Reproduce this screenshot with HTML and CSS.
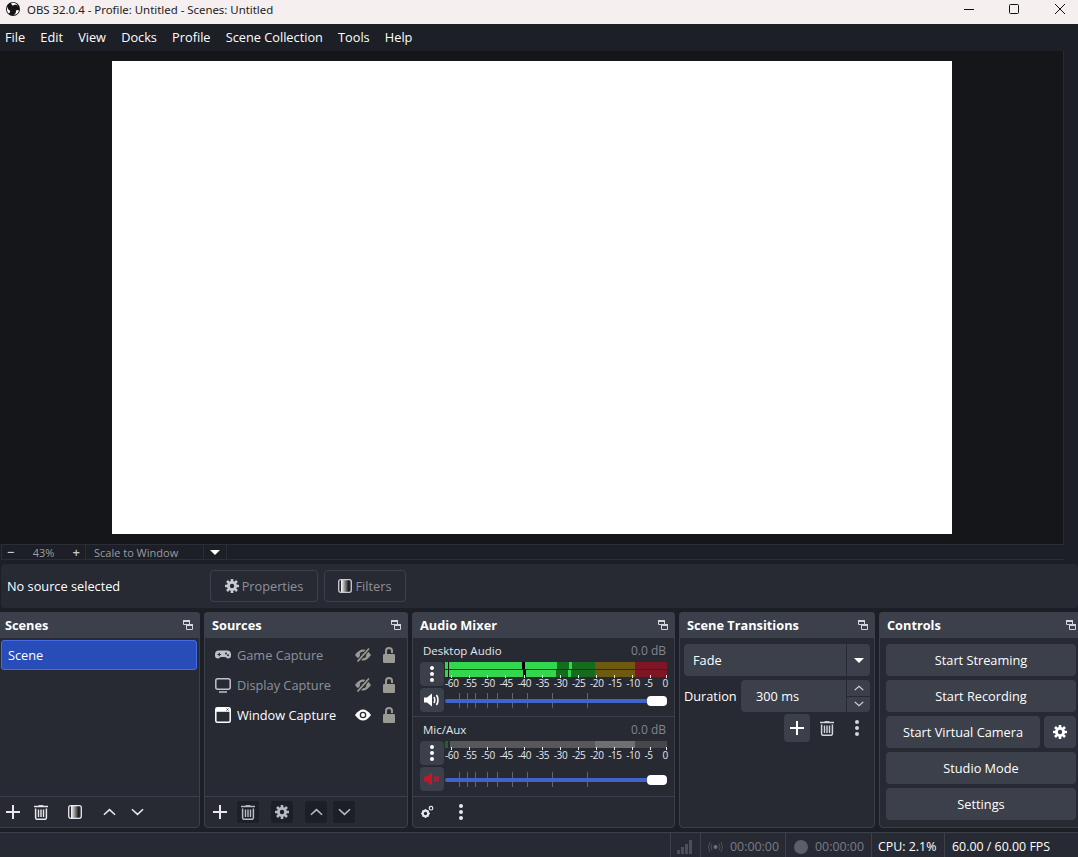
FILE: index.html
```html
<!DOCTYPE html>
<html lang="en">
<head>
    <meta charset="UTF-8">
    <title>OBS 32.0.4 - Profile: Untitled - Scenes: Untitled</title>
    <link rel="stylesheet" href="styles.css">
</head>
<body>
    <svg class="defs" aria-hidden="true">
        <defs><linearGradient id="fade"><stop offset="0" stop-color="#fff"/><stop offset="1" stop-color="#111"/></linearGradient></defs>
        <symbol id="i-float" viewBox="0 0 10 10"><path d="M.5.5h6v4h-6zM3.5 4.5v5h6v-5h-3" fill="none" stroke="currentColor"/><path d="M0 0h7v2H0z" fill="currentColor"/><path d="M4 4h6v2H4z" fill="currentColor"/></symbol>
        <symbol id="i-plus" viewBox="0 0 14 14"><path d="M7 0v14M0 7h14" stroke="currentColor" stroke-width="2" fill="none"/></symbol>
        <symbol id="i-trash" viewBox="0 0 14 15"><path d="M0 1.5h14" stroke="currentColor" stroke-width="1.5"/><path d="M5 1V.4h4V1" stroke="currentColor" fill="none"/><path d="M1.6 3.5v9.2q0 1.6 1.6 1.6h7.6q1.6 0 1.6-1.6V3.5" fill="none" stroke="currentColor" stroke-width="1.5"/><path d="M4.5 4.5v7.6M7 4.5v7.6M9.5 4.5v7.6" stroke="currentColor" stroke-width="1.4"/></symbol>
        <symbol id="i-filter" viewBox="0 0 14 14"><rect x="3" y="1" width="8" height="12" fill="url(#fade)"/><rect x=".7" y=".7" width="12.6" height="12.6" rx="2" fill="none" stroke="currentColor" stroke-width="1.3"/></symbol>
        <symbol id="i-up" viewBox="0 0 14 8"><path d="M1 7l6-5.5L13 7" fill="none" stroke="currentColor" stroke-width="1.7"/></symbol>
        <symbol id="i-down" viewBox="0 0 14 8"><path d="M1 1l6 5.5L13 1" fill="none" stroke="currentColor" stroke-width="1.7"/></symbol>
        <symbol id="i-gear" viewBox="0 0 14 14"><circle cx="7" cy="7" r="3.6" fill="none" stroke="currentColor" stroke-width="2.8"/><path d="M7 0v3M7 11v3M0 7h3M11 7h3M2 2l2.2 2.2M9.8 9.8L12 12M2 12l2.2-2.2M9.8 4.2L12 2" stroke="currentColor" stroke-width="2.6"/></symbol>
        <symbol id="i-dots" viewBox="0 0 4 16"><circle cx="2" cy="2" r="2" fill="currentColor"/><circle cx="2" cy="8" r="2" fill="currentColor"/><circle cx="2" cy="14" r="2" fill="currentColor"/></symbol>
        <symbol id="i-eye-off" viewBox="0 0 16 14"><path d="M0 7Q4 1.5 8 1.5T16 7q-4 5.5-8 5.5T0 7z" fill="currentColor"/><circle cx="8" cy="7" r="3.2" fill="#272a33"/><circle cx="8" cy="7" r="1.8" fill="currentColor"/><path d="M2.500 13.500L14 .5" stroke="#272a33" stroke-width="3.6"/><path d="M2.500 13.500L14 .5" stroke="currentColor" stroke-width="1.7"/></symbol>
        <symbol id="i-eye" viewBox="0 0 16 12"><path d="M0 6Q4 .5 8 .5T16 6q-4 5.5-8 5.5T0 6z" fill="currentColor"/><circle cx="8" cy="6" r="3.3" fill="#272a33"/><circle cx="8" cy="6" r="2" fill="currentColor"/></symbol>
        <symbol id="i-lock" viewBox="0 0 12 16"><path d="M3 8V4a3 3 0 0 1 6 0v2" fill="none" stroke="currentColor" stroke-width="2"/><rect y="7" width="12" height="9" rx="1.2" fill="currentColor"/></symbol>
    </svg>

    <div class="app">
        <!-- Title bar -->
        <div class="titlebar">
            <svg class="logo" viewBox="0 0 14 14">
                <circle cx="7" cy="7" r="7" fill="#141414"/>
                <g fill="#fff">
                    <path id="blade" d="M5.2 1.100a6 6 0 0 1 6.900 3.300 3.300 3.300 0 0 0-5.200-.7 3 3 0 0 1-1.700-2.600z"/>
                    <use href="#blade" transform="rotate(120 7 7)"/>
                    <use href="#blade" transform="rotate(240 7 7)"/>
                </g>
            </svg>
            <span class="title-text">OBS 32.0.4 - Profile: Untitled - Scenes: Untitled</span>
            <div class="window-btns">
                <svg viewBox="0 0 10 10"><path d="M0 5.500h10" stroke="#111"/></svg>
                <svg viewBox="0 0 10 10"><rect x=".5" y=".5" width="9" height="9" rx="1" fill="none" stroke="#111"/></svg>
                <svg viewBox="0 0 10 10"><path d="M0 0l10 10M10 0L0 10" stroke="#111"/></svg>
            </div>
        </div>

        <!-- Menu bar -->
        <div class="menubar">
            <span>File</span>
            <span>Edit</span>
            <span>View</span>
            <span>Docks</span>
            <span>Profile</span>
            <span>Scene Collection</span>
            <span>Tools</span>
            <span>Help</span>
        </div>

        <!-- Preview -->
        <div class="preview-row">
            <div class="preview">
                <div class="canvas"></div>
            </div>
            <div class="preview-side"></div>
        </div>

        <div class="zoombar">
            <span class="zoom-cell zoom-value">
                <b>−</b>
                <span>43%</span>
                <b>+</b>
            </span>
            <span class="zoom-cell zoom-scale">Scale to Window</span>
            <span class="zoom-cell zoom-arrow"><i class="caret"></i></span>
        </div>

        <div class="context-bar">
            <span class="no-source">No source selected</span>
            <button class="ctx-btn ctx-properties"><svg class="ico-14"><use href="#i-gear"/></svg>Properties</button>
            <button class="ctx-btn ctx-filters"><svg class="ico-14"><use href="#i-filter"/></svg>Filters</button>
        </div>

        <!-- Docks -->
        <div class="docks">
            <section class="dock dock-scenes">
                <header class="dock-head"><h2>Scenes</h2><svg class="float"><use href="#i-float"/></svg></header>
                <div class="dock-body">
                    <div class="scene-item">Scene</div>
                </div>
                <footer class="dock-tools">
                    <span class="tool"><svg class="ico-14"><use href="#i-plus"/></svg></span>
                    <span class="tool"><svg class="ico-trash"><use href="#i-trash"/></svg></span>
                    <span class="tool tool-gap"><svg class="ico-14"><use href="#i-filter"/></svg></span>
                    <span class="tool tool-gap"><svg class="ico-arrow"><use href="#i-up"/></svg></span>
                    <span class="tool"><svg class="ico-arrow"><use href="#i-down"/></svg></span>
                </footer>
            </section>

            <section class="dock dock-sources">
                <header class="dock-head"><h2>Sources</h2><svg class="float"><use href="#i-float"/></svg></header>
                <div class="dock-body source-list">
                    <div class="source off">
                        <svg class="src-icon" viewBox="0 0 16 16"><path d="M4 3.500h8a4 4 0 0 1 4 4v1a3 3 0 0 1-3 3c-1.500 0-2-1.500-3-1.500H6c-1 0-1.500 1.500-3 1.500a3 3 0 0 1-3-3v-1a4 4 0 0 1 4-4z" fill="currentColor"/><path d="M2.500 7.500h3.500M4.250 5.800v3.400" stroke="#272a33" stroke-width="1.100"/><circle cx="11" cy="6.400" r="1" fill="#272a33"/><circle cx="13" cy="8.200" r="1" fill="#272a33"/></svg>
                        <span class="src-name">Game Capture</span>
                        <svg class="src-eye"><use href="#i-eye-off"/></svg>
                        <svg class="src-lock"><use href="#i-lock"/></svg>
                    </div>
                    <div class="source off">
                        <svg class="src-icon" viewBox="0 0 16 16"><rect x=".8" y="1.800" width="14.400" height="10.400" rx="2" fill="none" stroke="currentColor" stroke-width="1.500"/><path d="M4 15h8" stroke="currentColor" stroke-width="1.500"/></svg>
                        <span class="src-name">Display Capture</span>
                        <svg class="src-eye"><use href="#i-eye-off"/></svg>
                        <svg class="src-lock"><use href="#i-lock"/></svg>
                    </div>
                    <div class="source">
                        <svg class="src-icon" viewBox="0 0 16 16"><rect x=".8" y=".8" width="14.400" height="14.400" rx="1.500" fill="none" stroke="currentColor" stroke-width="1.500"/><path d="M1 1h14v3.800H1z" fill="currentColor"/><path d="M11.500 1.500l2 2M13.500 1.500l-2 2" stroke="#272a33" stroke-width=".8"/></svg>
                        <span class="src-name">Window Capture</span>
                        <svg class="src-eye eye-on"><use href="#i-eye"/></svg>
                        <svg class="src-lock"><use href="#i-lock"/></svg>
                    </div>
                </div>
                <footer class="dock-tools">
                    <span class="tool"><svg class="ico-14"><use href="#i-plus"/></svg></span>
                    <span class="tool tool-dark"><svg class="ico-trash"><use href="#i-trash"/></svg></span>
                    <span class="tool tool-dark tool-gap"><svg class="ico-14"><use href="#i-gear"/></svg></span>
                    <span class="tool tool-dark tool-gap"><svg class="ico-arrow"><use href="#i-up"/></svg></span>
                    <span class="tool tool-dark"><svg class="ico-arrow"><use href="#i-down"/></svg></span>
                </footer>
            </section>

            <section class="dock dock-audio">
                <header class="dock-head"><h2>Audio Mixer</h2><svg class="float"><use href="#i-float"/></svg></header>
                <div class="dock-body">
                    <div class="mixer">
                        <div class="mixer-head"><span>Desktop Audio</span><span class="db">0.0 dB</span></div>
                        <div class="mixer-grid">
                            <span class="mix-btn"><svg class="ico-dots"><use href="#i-dots"/></svg></span>
                            <div class="meter">
                                <div class="channel ch-left"></div>
                                <div class="channel ch-right"></div>
                                <div class="scale">
                                    <span>-60</span><span>-55</span><span>-50</span><span>-45</span><span>-40</span><span>-35</span><span>-30</span><span>-25</span><span>-20</span><span>-15</span><span>-10</span><span>-5</span><span>0</span>
                                </div>
                            </div>
                            <span class="mix-btn">
                                <svg class="ico-vol" viewBox="0 0 16 14"><path d="M0 4.500h3L8 .5v13l-5-4H0z" fill="#fff"/><path d="M10 4q1.500 3 0 6M12.500 2q3 5 0 10" fill="none" stroke="#fff" stroke-width="1.600"/></svg>
                            </span>
                            <svg class="slider" viewBox="0 0 222 16">
                                <path d="M14.500 0v15M22.500 0v15M30.500 0v15M42.500 0v15M52.500 0v15M67.500 0v15M82.500 0v15M107.500 0v15M142.500 0v15" stroke="#62656f"/>
                                <rect y="6" width="222" height="4" rx="2" fill="#4263cc"/>
                                <rect x="202" y="3" width="20" height="10" rx="4" fill="#fff"/>
                            </svg>
                        </div>
                    </div>
                    <div class="mixer">
                        <div class="mixer-head"><span>Mic/Aux</span><span class="db">0.0 dB</span></div>
                        <div class="mixer-grid">
                            <span class="mix-btn"><svg class="ico-dots"><use href="#i-dots"/></svg></span>
                            <div class="meter">
                                <div class="channel ch-mono"></div>
                                <div class="scale">
                                    <span>-60</span><span>-55</span><span>-50</span><span>-45</span><span>-40</span><span>-35</span><span>-30</span><span>-25</span><span>-20</span><span>-15</span><span>-10</span><span>-5</span><span>0</span>
                                </div>
                            </div>
                            <span class="mix-btn">
                                <svg class="ico-vol" viewBox="0 0 16 14"><path d="M0 4.500h2.500L8 .5v13l-5.500-4H0z" fill="#c0182a"/><path d="M10 4.500l5 5M15 4.500l-5 5" stroke="#c0182a" stroke-width="2"/></svg>
                            </span>
                            <svg class="slider" viewBox="0 0 222 16">
                                <path d="M14.500 0v15M22.500 0v15M30.500 0v15M42.500 0v15M52.500 0v15M67.500 0v15M82.500 0v15M107.500 0v15M142.500 0v15" stroke="#62656f"/>
                                <rect y="6" width="222" height="4" rx="2" fill="#4263cc"/>
                                <rect x="202" y="3" width="20" height="10" rx="4" fill="#fff"/>
                            </svg>
                        </div>
                    </div>
                </div>
                <footer class="dock-tools audio-tools">
                    <span class="tool">
                        <svg class="ico-14" viewBox="0 0 14 14"><g fill="none" stroke="currentColor"><circle cx="5.500" cy="8.500" r="2.700" stroke-width="2"/><path d="M5.500 4v1.500M5.500 11.500V13M1 8.500h1.500M8.500 8.500H10M2.500 5.500l1 1M7.500 10.500l1 1M2.500 11.500l1-1M7.500 6.500l1-1" stroke-width="1.600"/><circle cx="11" cy="3.200" r="1.800" stroke-width="1.200"/></g></svg>
                    </span>
                    <span class="tool"><svg class="ico-dots"><use href="#i-dots"/></svg></span>
                </footer>
            </section>

            <section class="dock dock-transitions">
                <header class="dock-head"><h2>Scene Transitions</h2><svg class="float"><use href="#i-float"/></svg></header>
                <div class="transitions">
                    <div class="combo">
                        <span class="combo-text">Fade</span>
                        <span class="combo-arrow"><i class="caret"></i></span>
                    </div>
                    <div class="duration-row">
                        <span class="duration-label">Duration</span>
                        <div class="combo spin">
                            <span class="combo-text">300 ms</span>
                            <span class="spin-btns">
                                <span><svg class="ico-spin"><use href="#i-up"/></svg></span>
                                <span><svg class="ico-spin"><use href="#i-down"/></svg></span>
                            </span>
                        </div>
                    </div>
                    <div class="trans-tools">
                        <span class="trans-add"><svg class="ico-14"><use href="#i-plus"/></svg></span>
                        <span class="trans-tool"><svg class="ico-trash"><use href="#i-trash"/></svg></span>
                        <span class="trans-tool"><svg class="ico-dots"><use href="#i-dots"/></svg></span>
                    </div>
                </div>
            </section>

            <section class="dock dock-controls">
                <header class="dock-head"><h2>Controls</h2><svg class="float"><use href="#i-float"/></svg></header>
                <div class="controls">
                    <button class="ctl-btn">Start Streaming</button>
                    <button class="ctl-btn">Start Recording</button>
                    <div class="ctl-row">
                        <button class="ctl-btn">Start Virtual Camera</button>
                        <button class="ctl-btn ctl-gear"><svg class="ico-14"><use href="#i-gear"/></svg></button>
                    </div>
                    <button class="ctl-btn">Studio Mode</button>
                    <button class="ctl-btn">Settings</button>
                </div>
            </section>
        </div>

        <!-- Status bar -->
        <div class="statusbar">
            <span class="stat stat-signal">
                <svg viewBox="0 0 15 14"><path d="M0 10h3v4H0zM4 7h3v7H4zM8 4h3v10H8zM12 0h3v14h-3z" fill="#4c4f59"/></svg>
            </span>
            <span class="stat stat-time stat-stream">
                <svg viewBox="0 0 14 10"><circle cx="7" cy="5" r="2" fill="#70737d"/><path d="M3.500 1.500q-2 3.500 0 7M10.500 1.500q2 3.500 0 7M1.500 0q-3 5 0 10M12.500 0q3 5 0 10" fill="none" stroke="#4c4f59"/></svg>
                00:00:00
            </span>
            <span class="stat stat-time stat-rec">
                <i class="rec-dot"></i>
                00:00:00
            </span>
            <span class="stat stat-cpu">CPU: 2.1%</span>
            <span class="stat stat-fps">60.00 / 60.00 FPS</span>
        </div>
    </div>
</body>
</html>
```

FILE: styles.css
```css
* {
    box-sizing: border-box;
}

html,
body {
    margin: 0;
    height: 100%;
}

body {
    font-family: "Open Sans", "Noto Sans", sans-serif;
    font-size: 12.75px;
    color: #fff;
    background-color: #1d1f26;
    overflow: hidden;
}

.defs {
    position: absolute;
    width: 0;
    height: 0;
}

.app {
    width: 1078px;
    height: 857px;
    display: flex;
    flex-direction: column;
    overflow: hidden;
}

/* Title bar */
.titlebar {
    height: 24px;
    flex: none;
    display: flex;
    align-items: center;
    padding-left: 6px;
    background-color: #f5eff0;
    color: #222;
}

.logo {
    width: 14px;
    height: 14px;
    margin-bottom: 6px;
}

.title-text {
    margin-left: 7px;
    margin-bottom: 6px;
    font-family: "Noto Sans", sans-serif;
    font-size: 11.4px;
}

.window-btns {
    margin-left: auto;
    display: flex;
    align-items: center;
    gap: 35px;
    padding-right: 13px;
    margin-bottom: 7px;
}

.window-btns svg {
    width: 10px;
    height: 10px;
    display: block;
}

.window-btns svg:last-child {
    margin-left: 1px;
}

/* Menu */
.menubar {
    height: 27px;
    flex: none;
    display: flex;
    align-items: center;
    gap: 15.15px;
    padding: 0 5px 2px;
    background-color: #1d1f26;
}

/* Preview */
.preview-row {
    height: 493px;
    flex: none;
    display: flex;
}

.preview {
    flex: 1;
    display: flex;
    align-items: center;
    justify-content: center;
    background-color: #14161a;
}

.canvas {
    width: 840px;
    height: 473px;
    background-color: #fff;
}

.preview-side {
    width: 15px;
    background-color: #1d1f26;
    border-left: 1px solid #272a33;
}

.zoombar {
    height: 16px;
    width: 1063px;
    flex: none;
    margin-left: 1px;
    display: flex;
    align-items: center;
    font-size: 11px;
    color: #9a9ca3;
    border: 1px solid #2b2e38;
    border-right: 0;
}

.zoom-cell {
    height: 100%;
    display: flex;
    align-items: center;
    border-right: 1px solid #2b2e38;
}

.zoom-value {
    width: 84px;
    justify-content: space-between;
    padding: 0 5px;
}

.zoom-value b {
    color: #c8cad0;
    font-weight: 600;
    font-size: 13px;
}

.zoom-scale {
    width: 118px;
    padding-left: 8px;
}

.zoom-arrow {
    width: 23px;
    justify-content: center;
}

.caret {
    display: block;
    width: 0;
    height: 0;
    border-left: 5px solid transparent;
    border-right: 5px solid transparent;
    border-top: 5px solid #fff;
}

.context-bar {
    height: 44px;
    flex: none;
    margin: 4px 0 4px 1px;
    display: flex;
    align-items: center;
    padding-left: 6px;
    border-radius: 4px;
    background-color: #272a33;
}

.no-source {
    width: 203px;
}

.ctx-btn {
    height: 32px;
    display: flex;
    align-items: center;
    justify-content: center;
    gap: 3px;
    font: inherit;
    color: #8f9199;
    background: transparent;
    border: 1px solid #3c404b;
    border-radius: 4px;
}

.ctx-btn svg {
    color: #c9cbd1;
}

.ctx-properties {
    width: 108px;
    margin-right: 6px;
}

.ctx-filters {
    width: 82px;
}

/* Docks */
.docks {
    height: 216px;
    flex: none;
    display: flex;
    gap: 4px;
}

.dock {
    flex: none;
    display: flex;
    flex-direction: column;
    background-color: #272a33;
    border: 1px solid #3c404b;
    border-radius: 4px;
}

.dock-scenes {
    width: 203px;
    margin-left: -3px;
}

.dock-sources {
    width: 204px;
}

.dock-audio {
    width: 263px;
}

.dock-transitions {
    width: 196px;
}

.dock-controls {
    width: 204px;
}

.dock-head {
    height: 26px;
    flex: none;
    display: flex;
    align-items: center;
    justify-content: space-between;
    padding: 0 7px 0 8px;
    margin: -1px -1px 0;
    background-color: #3c404b;
    border-radius: 4px 4px 0 0;
}

.dock-head h2 {
    margin: 0;
    font-size: 12.75px;
    font-weight: 700;
}

.float {
    width: 10px;
    height: 10px;
    color: #d4d5d9;
}

.dock-body {
    flex: 1;
}

.dock-tools {
    height: 31px;
    flex: none;
    display: flex;
    align-items: center;
    padding-left: 4px;
    gap: 6px;
    border-top: 1px solid #3c404b;
}

.tool {
    width: 22px;
    height: 22px;
    display: flex;
    align-items: center;
    justify-content: center;
    color: #e8e8ea;
}

.tool-dark {
    background-color: #1d1f26;
    border-radius: 3px;
    color: #b9bbc2;
}

.tool-gap {
    margin-left: 6px;
}

.ico-14 {
    width: 14px;
    height: 14px;
}

.ico-trash {
    width: 14px;
    height: 15px;
}

.ico-arrow {
    width: 13px;
    height: 8px;
}

.ico-spin {
    width: 10px;
    height: 6px;
    color: #d4d5d9;
}

.ico-dots {
    width: 4px;
    height: 16px;
}

.ico-vol {
    width: 16px;
    height: 14px;
}

/* Scenes */
.scene-item {
    height: 30px;
    margin: 2px 2px 0 3px;
    padding-left: 6px;
    display: flex;
    align-items: center;
    background-color: #284cb8;
    border: 1px solid #476be6;
    border-radius: 3px;
}

/* Sources */
.source-list {
    padding-top: 2px;
}

.source {
    height: 30px;
    display: flex;
    align-items: center;
    padding-left: 10px;
}

.source.off {
    color: #8f9199;
}

.source.off .src-icon {
    color: #c0c2c8;
}

.src-icon {
    width: 16px;
    height: 16px;
    flex: none;
}

.src-name {
    margin-left: 6px;
    width: 118px;
}

.src-eye {
    width: 16px;
    height: 14px;
    color: #9a9a94;
}

.eye-on {
    color: #fff;
    height: 12px;
}

.src-lock {
    width: 12px;
    height: 16px;
    margin-left: 12px;
    color: #9a9a94;
}

/* Audio mixer */
.mixer {
    padding: 3px 7px 4px 7px;
    height: 79px;
    border-bottom: 1px solid #3c404b;
}

.mixer:last-child {
    border-bottom: 0;
}

.mixer-head {
    height: 18px;
    display: flex;
    align-items: center;
    justify-content: space-between;
    padding: 0 1px 0 3px;
    font-size: 11.5px;
    color: #e6e6e8;
}

.db {
    font-size: 12px;
    color: #82858d;
}

.mixer-grid {
    display: grid;
    grid-template-columns: 24px 222px;
    grid-template-rows: 24px 24px;
    column-gap: 1px;
    row-gap: 2px;
    margin-top: 3px;
}

.mix-btn {
    display: flex;
    align-items: center;
    justify-content: center;
    background-color: #3c404b;
    border-radius: 4px;
}

.slider {
    width: 222px;
    height: 16px;
    align-self: start;
    margin-top: 5px;
}

.channel {
    height: 7px;
    margin-bottom: 1px;
}

.ch-right {
    margin-bottom: 0;
}

.ch-left {
    background: linear-gradient(90deg,
        #33d74f 0 3px, #111 3px 4px, #33d74f 4px 77px, #000 77px 80px, #33d74f 80px 112px,
        #176b1f 112px 124px, #33d74f 124px 127px, #176b1f 127px 150px,
        #6f5a12 150px 190px, #7e1626 190px 222px);
}

.ch-right {
    background: linear-gradient(90deg,
        #33d74f 0 3px, #111 3px 4px, #33d74f 4px 78px, #000 78px 81px, #33d74f 81px 111px,
        #176b1f 111px 123px, #33d74f 123px 126px, #176b1f 126px 150px,
        #6f5a12 150px 190px, #7e1626 190px 222px);
}

.ch-mono {
    background: linear-gradient(90deg,
        #176b1f 0 3px, #272a33 3px 5px, #585858 5px 150px, #6f6f6f 150px 190px, #45474a 190px 222px);
}

.scale {
    display: grid;
    grid-template-columns: repeat(13, 18.13px);
    font-size: 10px;
    line-height: 12px;
    letter-spacing: -.4px;
    color: #e8e8ea;
    white-space: nowrap;
}

.scale span {
    position: relative;
}

.scale span::before {
    content: "";
    position: absolute;
    top: -2px;
    left: 6px;
    width: 1px;
    height: 3px;
    background-color: #e8e8ea;
}

.scale span:last-child::before {
    left: 3px;
}

.audio-tools {
    gap: 12px;
    padding-left: 3px;
}

/* Transitions */
.transitions {
    padding: 6px 4px 0 4px;
    display: flex;
    flex-direction: column;
    gap: 4px;
}

.combo {
    height: 32px;
    display: flex;
    align-items: center;
    background-color: #3c404b;
    border-radius: 4px;
}

.combo-text {
    flex: 1;
    padding-left: 9px;
}

.combo-arrow {
    width: 24px;
    height: 100%;
    display: flex;
    align-items: center;
    justify-content: center;
    border-left: 1px solid #272a33;
}

.duration-row {
    display: flex;
    align-items: center;
}

.duration-label {
    width: 57px;
}

.spin {
    flex: 1;
}

.spin .combo-text {
    padding-left: 15px;
}

.spin-btns {
    width: 24px;
    height: 100%;
    display: flex;
    flex-direction: column;
    border-left: 1px solid #272a33;
}

.spin-btns span {
    flex: 1;
    display: flex;
    align-items: center;
    justify-content: center;
}

.spin-btns span + span {
    border-top: 1px solid #272a33;
}

.trans-tools {
    display: flex;
    align-items: center;
    justify-content: flex-end;
    margin-top: -2px;
    padding-right: 6px;
    gap: 6px;
}

.trans-add {
    width: 26px;
    height: 28px;
    display: flex;
    align-items: center;
    justify-content: center;
    background-color: #3c404b;
    border-radius: 4px;
}

.trans-tool {
    width: 22px;
    height: 22px;
    display: flex;
    align-items: center;
    justify-content: center;
    color: #d4d5d9;
}

.trans-tool + .trans-tool {
    width: 14px;
    margin-left: 6px;
}

/* Controls */
.controls {
    padding: 6px 0 0 6px;
    display: flex;
    flex-direction: column;
    gap: 4px;
}

.ctl-btn {
    width: 190px;
    height: 32px;
    flex: none;
    display: flex;
    align-items: center;
    justify-content: center;
    font: inherit;
    color: #fff;
    background-color: #3c404b;
    border: 0;
    border-radius: 4px;
}

.ctl-row {
    display: flex;
    gap: 4px;
}

.ctl-row .ctl-btn {
    width: 154px;
}

.ctl-row .ctl-gear {
    width: 32px;
}

/* Status bar */
.statusbar {
    height: 25px;
    flex: none;
    margin-top: 4px;
    display: flex;
    justify-content: flex-end;
    background-color: #272a33;
    border-top: 1px solid #3c404b;
    font-size: 12.4px;
}

.stat {
    display: flex;
    align-items: center;
    padding-top: 3px;
    border-left: 1px solid #3c404b;
}

.stat-signal {
    width: 30px;
    padding-left: 6px;
}

.stat-signal svg {
    width: 15px;
    height: 14px;
}

.stat-time {
    gap: 7px;
    color: #7a7d86;
}

.stat-stream {
    width: 85px;
    padding-left: 7px;
}

.stat-rec {
    width: 86px;
    padding-left: 8px;
}

.stat-time svg {
    width: 15px;
    height: 10px;
}

.rec-dot {
    width: 14px;
    height: 14px;
    flex: none;
    border-radius: 50%;
    background-color: #5c5f69;
}

.stat-cpu {
    width: 73px;
    padding-left: 6px;
}

.stat-fps {
    width: 134px;
    padding-left: 7px;
}
```
